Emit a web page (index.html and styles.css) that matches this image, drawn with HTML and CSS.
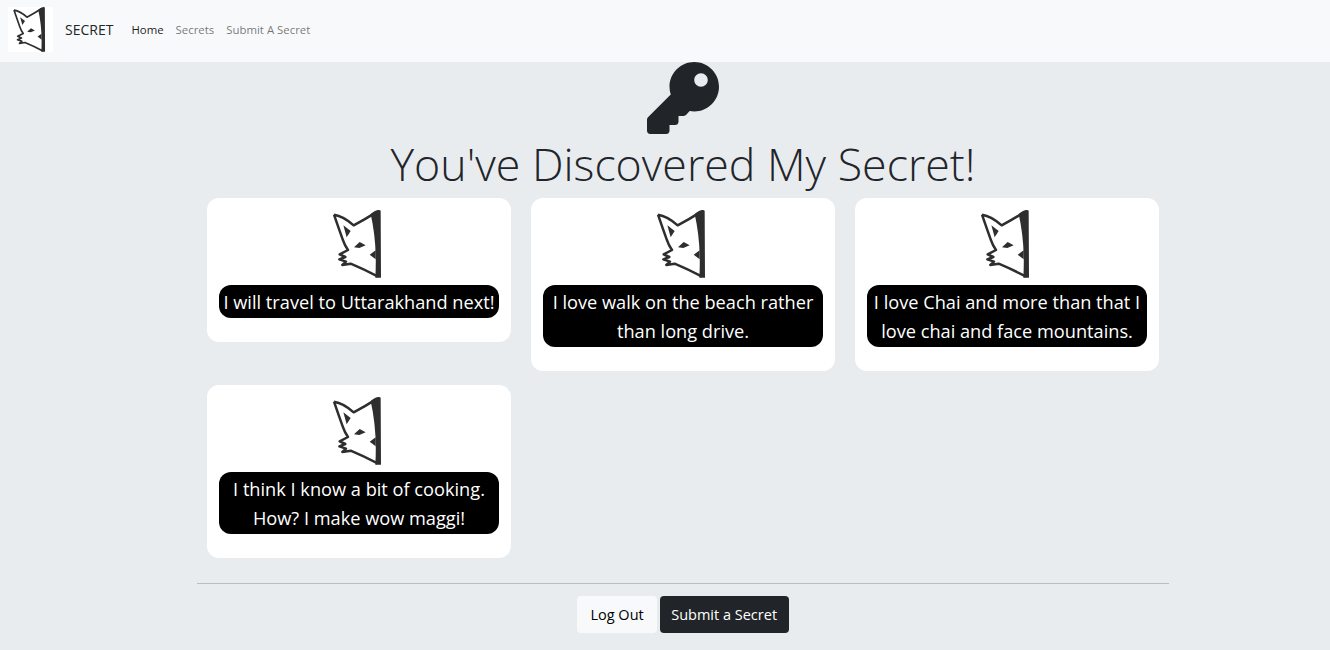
FILE: index.html
```html
<!DOCTYPE html>
<html lang="en">
<head>
<meta charset="utf-8">
<title>Secret</title>
<link rel="stylesheet" href="styles.css">
</head>
<body>
<svg class="defs" width="0" height="0" aria-hidden="true">
  <symbol id="fox" viewBox="45 30 204 204">
    <path class="fox-line" d="M72 44 Q100 48 131 76 Q165 58 198 37 M72 44 Q86 85 98 118 Q104 136 114 150 L89 163 L106 171 L88 178 L108 185 L97 195 L122 191 Q160 207 203 229"/>
    <path class="fox-ink" d="M182 42 Q204 25 212 32 L213 233 L196 233 Q202 130 182 42Z"/>
    <path class="fox-ink" d="M100 76 L122 93 L110 112Z"/>
    <path class="fox-ink" d="M132 142 L149 126 L167 136 L148 144Z"/>
    <path class="fox-ink" d="M179 164 L197 151 L197 178Z"/>
  </symbol>
</svg>
<nav class="navbar">
  <svg class="nav-logo"><use href="#fox"/></svg>
  <a class="brand" href="#">SECRET</a>
  <ul class="nav-links">
    <li><a class="active" href="#">Home</a></li>
    <li><a href="#">Secrets</a></li>
    <li><a href="#">Submit A Secret</a></li>
  </ul>
</nav>
<main class="page">
  <header class="hero">
    <svg class="key" viewBox="0 0 512 512"><path d="M512 176.001C512 273.203 433.202 352 336 352c-11.22 0-22.19-1.062-32.827-3.069l-24.012 27.014A23.999 23.999 0 0 1 261.223 384H224v40c0 13.255-10.745 24-24 24h-40v40c0 13.255-10.745 24-24 24H24c-13.255 0-24-10.745-24-24v-78.059c0-6.365 2.529-12.47 7.029-16.971l161.802-161.802C163.108 213.814 160 195.271 160 176 160 78.798 238.797.001 335.999 0 433.488-.001 512 78.511 512 176.001zM336 128c0 26.51 21.49 48 48 48s48-21.49 48-48-21.49-48-48-48-48 21.49-48 48z"/></svg>
    <h1>You've Discovered My Secret!</h1>
  </header>
  <section class="cards">
    <article class="card"><svg class="card-fox"><use href="#fox"/></svg><p class="secret">I will travel to Uttarakhand next!</p></article>
    <article class="card"><svg class="card-fox"><use href="#fox"/></svg><p class="secret">I love walk on the beach rather than long drive.</p></article>
    <article class="card"><svg class="card-fox"><use href="#fox"/></svg><p class="secret">I love Chai and more than that I love chai and face mountains.</p></article>
    <article class="card"><svg class="card-fox"><use href="#fox"/></svg><p class="secret">I think I know a bit of cooking. How? I make wow maggi!</p></article>
  </section>
  <hr class="rule">
  <div class="actions">
    <a class="btn btn-light" href="#">Log Out</a>
    <a class="btn btn-dark" href="#">Submit a Secret</a>
  </div>
</main>
</body>
</html>
```
FILE: styles.css
```css
* { box-sizing: border-box; }
html, body { margin: 0; padding: 0; }
body {
  background: #e9ecef;
  color: #212529;
  font-family: "Open Sans", "Noto Sans", sans-serif;
  font-size: 15px;
  line-height: 1.5;
  overflow: hidden;
  height: 650px;
}
a { text-decoration: none; }
.defs { position: absolute; }
.fox-line { fill: none; stroke: #2e2e2e; stroke-width: 7.5; stroke-linejoin: round; }
.fox-ink { fill: #2e2e2e; }

.navbar {
  display: flex;
  align-items: center;
  height: 62px;
  background: #f8f9fa;
  padding: 7px 0 10px 8px;
}
.nav-logo { width: 45px; height: 45px; background: #fff; display: block; }
.brand { color: #212529; font-size: 14px; margin-left: 12px; }
.nav-links { display: flex; list-style: none; margin: 0 0 0 18px; padding: 0; gap: 12px; font-size: 11.4px; }
.nav-links a { color: rgba(0,0,0,.55); }
.nav-links a.active { color: rgba(0,0,0,.9); }

.page { width: 972px; margin-left: 197px; }
.hero { text-align: center; height: 136px; }
.key { display: block; width: 72px; height: 72px; margin: 0 auto; fill: #212529; }
.hero h1 { margin: 0; font-weight: 300; font-size: 44.7px; line-height: 60px; color: #212529; white-space: nowrap; }

.cards {
  display: grid;
  grid-template-columns: repeat(3, 304px);
  gap: 14px 20px;
  justify-content: center;
  align-items: start;
}
.card { background: #fff; border-radius: 12px; padding: 12px; }
.card-fox { display: block; width: 68px; height: 68px; margin: 0 auto 7px; }
.secret {
  margin: 0 0 12px;
  background: #000;
  color: #fff;
  border-radius: 12px;
  padding: 3px 2px 1px;
  text-align: center;
  font-size: 18.2px;
  line-height: 29px;
}

.rule { border: 0; height: 1px; background: #bcbfc2; margin: 25px 0 12px; }
.actions { display: flex; justify-content: center; gap: 3px; }
.btn {
  display: block;
  height: 37px;
  border-radius: 4px;
  font-size: 14.5px;
  line-height: 37px;
}
.btn-light { background: #f8f9fa; color: #000; padding: 0 13px; }
.btn-dark { background: #212529; color: #fff; padding: 0 11.5px; }
```
